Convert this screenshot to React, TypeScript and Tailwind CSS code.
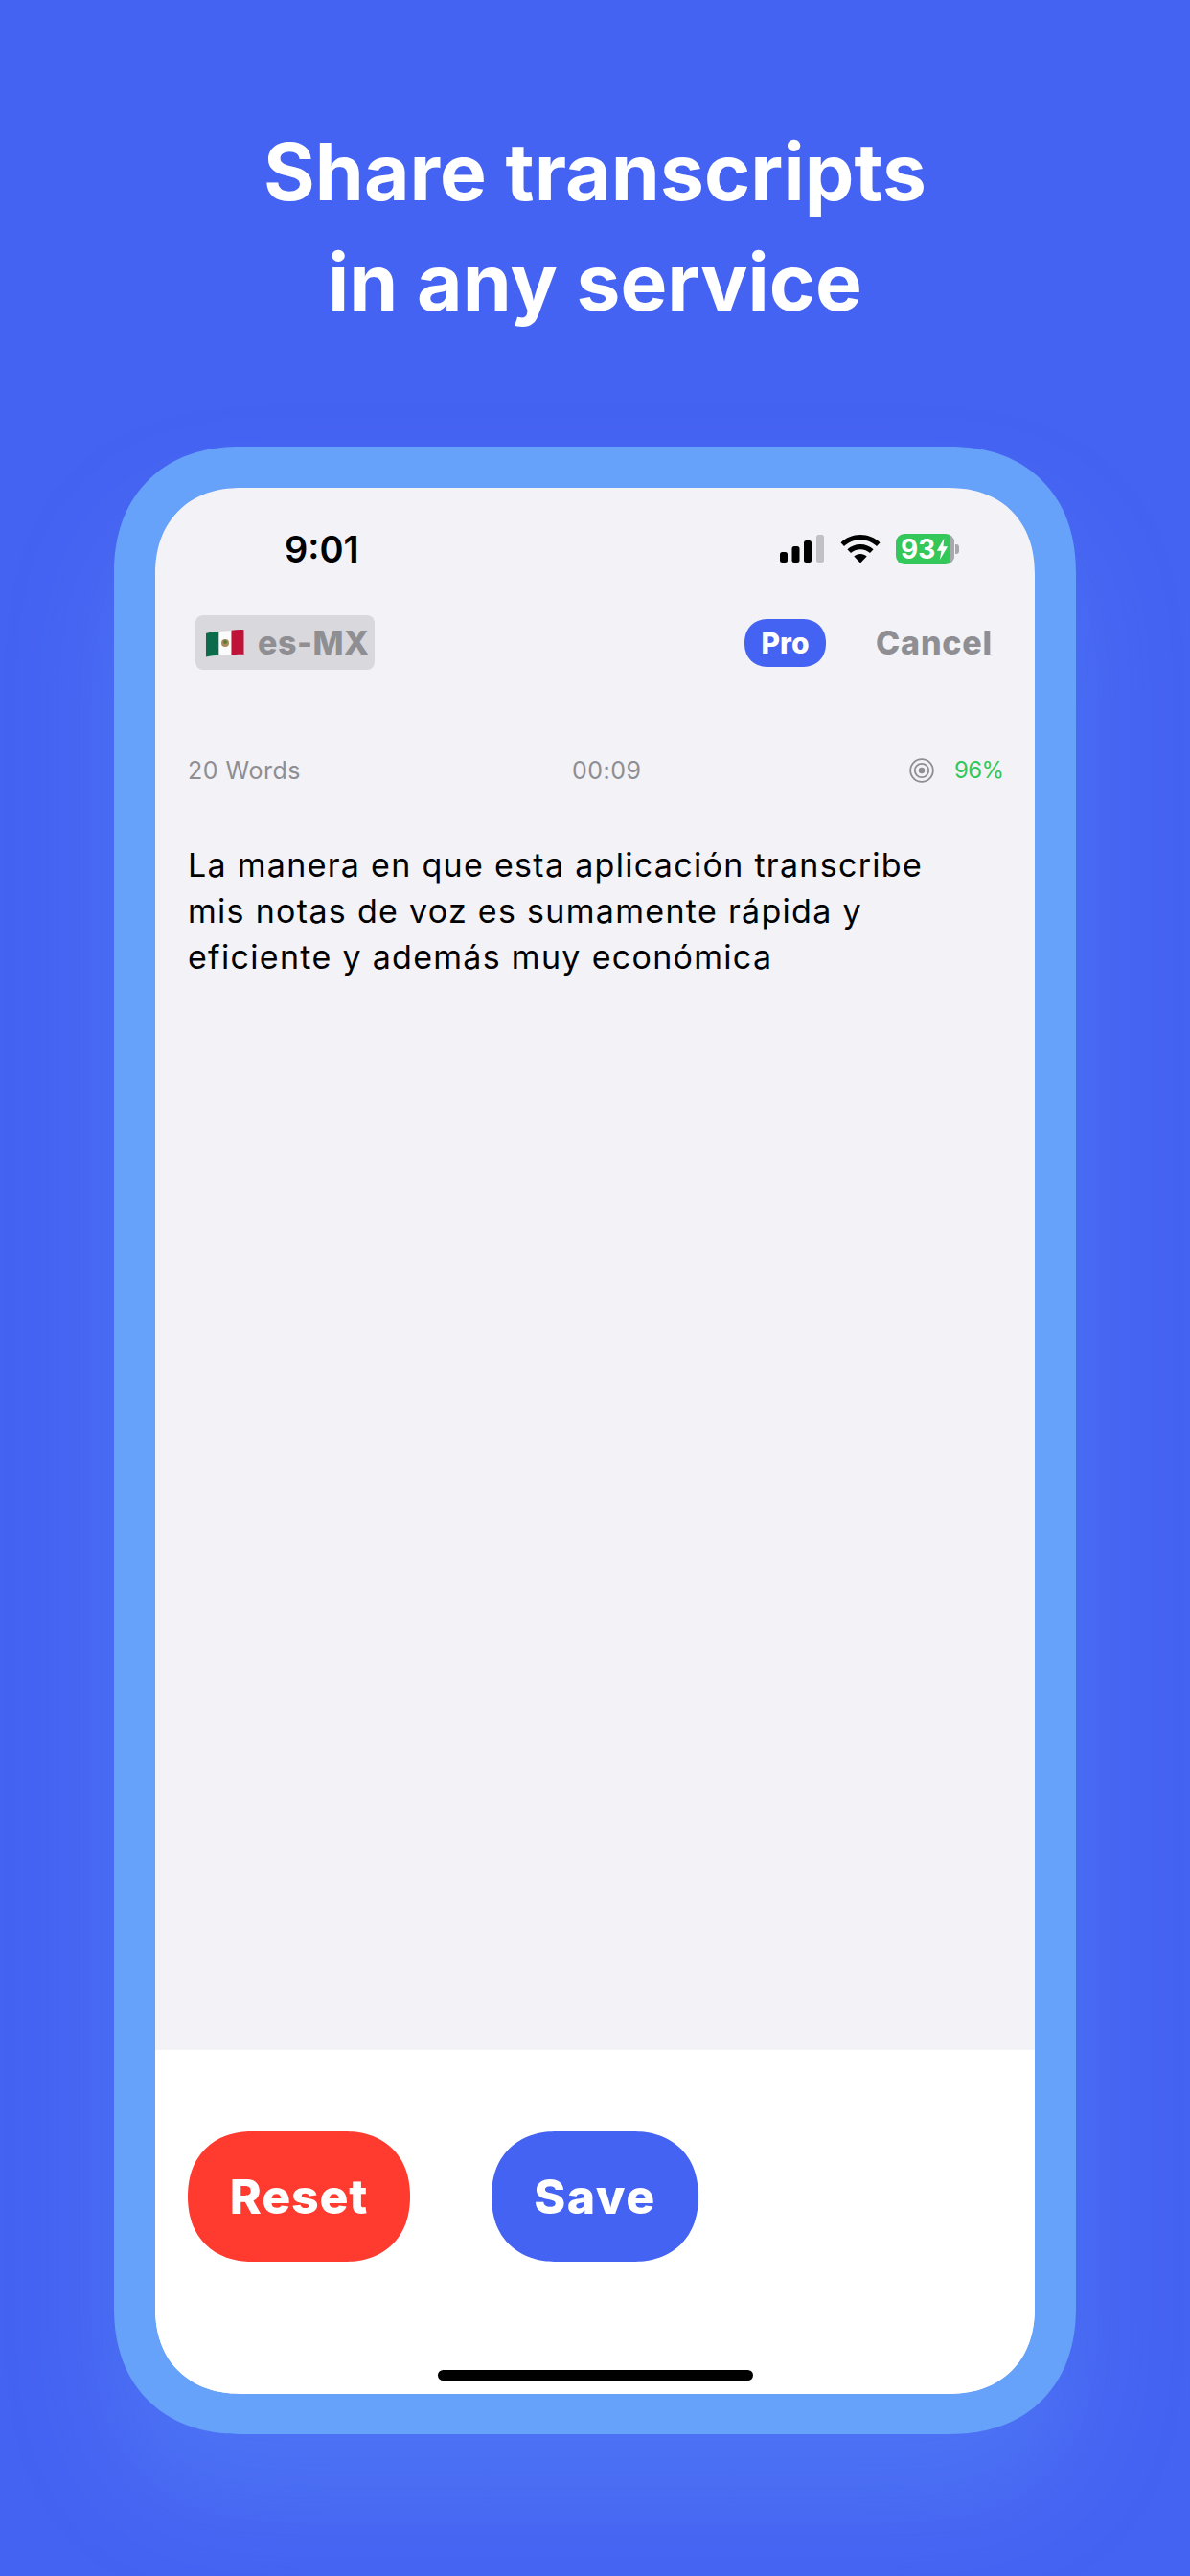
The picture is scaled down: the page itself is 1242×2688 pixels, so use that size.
import React from "react";

const Signal = () => (
  <svg width="46" height="30" viewBox="0 0 46 30" className="block">
    <rect x="0" y="18" width="8" height="11" rx="2.5" fill="#000" />
    <rect x="12.500" y="12" width="8" height="17" rx="2.5" fill="#000" />
    <rect x="25" y="6" width="8" height="23" rx="2.5" fill="#000" />
    <rect x="38" y="0" width="8" height="29" rx="2.5" fill="#c0c0c5" />
  </svg>
);

const Wifi = () => (
  <svg width="42" height="30" viewBox="0 0 42 30" className="block">
    <path d="M21 0C13 0 6 3 0.500 8.200L4 12C8.600 7.700 14.500 5.200 21 5.200S33.400 7.700 38 12L41.500 8.200C36 3 29 0 21 0Z" fill="#000" />
    <path d="M21 10C15.800 10 11 12 7.400 15.300L11 19C13.600 16.700 17.100 15.300 21 15.300S28.400 16.700 31 19L34.600 15.300C31 12 26.200 10 21 10Z" fill="#000" />
    <path d="M21 20C18.500 20 16.100 20.900 14.300 22.500L21 29.500L27.700 22.500C25.900 20.900 23.500 20 21 20Z" fill="#000" />
  </svg>
);

const Target = () => (
  <svg width="26" height="26" viewBox="0 0 26 26" className="block">
    <circle cx="13" cy="13" r="11.800" fill="none" stroke="#8e8e93" strokeWidth="1.800" />
    <circle cx="13" cy="13" r="7.200" fill="none" stroke="#8e8e93" strokeWidth="1.800" />
    <circle cx="13" cy="13" r="3.200" fill="#8e8e93" />
  </svg>
);

const Flag = () => (
  <svg width="40" height="30" viewBox="0 0 40 30" className="block">
    <path d="M0 5C5 3.500 9 3.200 13.500 3V28C9 28 5 28.300 0 29.500Z" fill="#0b6b4a" />
    <path d="M13.500 3C18 3 22 2.500 26.500 1.800V27.300C22 27.800 18 28 13.500 28Z" fill="#fbfbfb" />
    <path d="M26.500 1.800C31 1 35.500 0.800 39.500 1.200V27C35.500 26.500 31 26.700 26.500 27.300Z" fill="#bf1438" />
    <circle cx="20" cy="15" r="4" fill="#a98a5a" />
    <circle cx="20" cy="14" r="2" fill="#5b7a3a" />
  </svg>
);

export default function App() {
  return (
    <div className="w-[1242px] h-[2688px] overflow-hidden bg-[#4563f2] flex flex-col items-center font-['Inter',sans-serif]">
      <h1 className="mt-[122px] h-[344px] text-center text-white font-bold text-[82px] leading-[115px] tracking-[0.1px]">
        Share transcripts
        <br />
        in any service
      </h1>

      <div className="w-[1004px] h-[2074px] shrink-0 rounded-[132px] [corner-shape:superellipse(1.15)] bg-[#66a1fa] shadow-[0_70px_110px_rgba(102,161,250,0.26)] pt-[43px] pb-[42px] px-[43px]">
        <div className="h-[1989px] rounded-[90px] [corner-shape:superellipse(1.15)] overflow-hidden bg-[#f2f2f7] flex flex-col">
          <div className="flex items-center justify-between h-[95px] pt-[32px] pl-[135px] pr-[79px]">
            <span className="text-[38px] font-semibold text-black leading-none">9:01</span>
            <div className="flex items-center gap-[16.500px]">
              <Signal />
              <Wifi />
              <div className="flex items-center gap-[1px]">
                <div className="relative w-[61px] h-[32px] rounded-[9px] bg-[#34c759] overflow-hidden flex items-center pl-[5px]">
                  <span className="text-white text-[28px] font-bold leading-none">93</span>
                  <svg width="13" height="26" viewBox="0 0 14 26" className="block ml-[1px]">
                    <path d="M9 1L1 15H6L4 25L13 10H8Z" fill="#fff" />
                  </svg>
                  <div className="absolute right-0 top-0 w-[5px] h-full bg-[#a8a8ad]" />
                </div>
                <div className="w-[4px] h-[10px] rounded-r-[3px] bg-[#a8a8ad]" />
              </div>
            </div>
          </div>

          <div className="flex items-center justify-between mt-[38px] pl-[42px] pr-[44px]">
            <div className="flex items-center h-[57px] w-[187px] rounded-[8px] bg-[#d8d8dd] pl-[11px]">
              <Flag />
              <span className="ml-[14px] text-[34px] font-extrabold text-[#8e8e93] leading-none tracking-[0.5px]">es-MX</span>
            </div>
            <div className="flex items-center">
              <div className="w-[85px] h-[50px] rounded-[25px] [corner-shape:superellipse(1.15)] bg-[#4563f2] flex items-center justify-center text-white font-extrabold text-[30px] leading-none">Pro</div>
              <span className="ml-[52px] text-[34px] font-extrabold text-[#8e8e93] leading-none tracking-[0.8px]">Cancel</span>
            </div>
          </div>

          <div className="relative flex items-center justify-between mt-[90px] h-[30px] pl-[34px] pr-[35px] text-[25px] leading-none text-[#8e8e93] font-normal tracking-[0.5px]">
            <span>20 Words</span>
            <span className="absolute left-[435px]">00:09</span>
            <div className="flex items-center gap-[21px]">
              <Target />
              <span className="text-[#34c759] text-[24px] tracking-[-0.6px] w-[49px] whitespace-nowrap">96%</span>
            </div>
          </div>

          <p className="mt-[60px] pl-[34px] pr-[60px] text-[34px] leading-[48px] text-black font-normal tracking-[1.3px]">
            La manera en que esta aplicación transcribe
            <br />
            mis notas de voz es sumamente rápida y
            <br />
            eficiente y además muy económica
          </p>

          <div className="mt-auto h-[359px] bg-white flex flex-col">
            <div className="flex items-start gap-[85px] pl-[34px] pt-[85px]">
              <div className="w-[232px] h-[136px] rounded-[68px] [corner-shape:superellipse(1.15)] bg-[#ff3b30] flex items-center justify-center text-white font-extrabold text-[50px] leading-none tracking-[0.8px]">Reset</div>
              <div className="w-[216px] h-[136px] rounded-[68px] [corner-shape:superellipse(1.15)] bg-[#4563f2] flex items-center justify-center text-white font-extrabold text-[50px] leading-none tracking-[1.5px]">Save</div>
            </div>
            <div className="mt-auto mb-[14px] mx-auto w-[329px] h-[11px] rounded-full bg-black" />
          </div>
        </div>
      </div>
    </div>
  );
}
